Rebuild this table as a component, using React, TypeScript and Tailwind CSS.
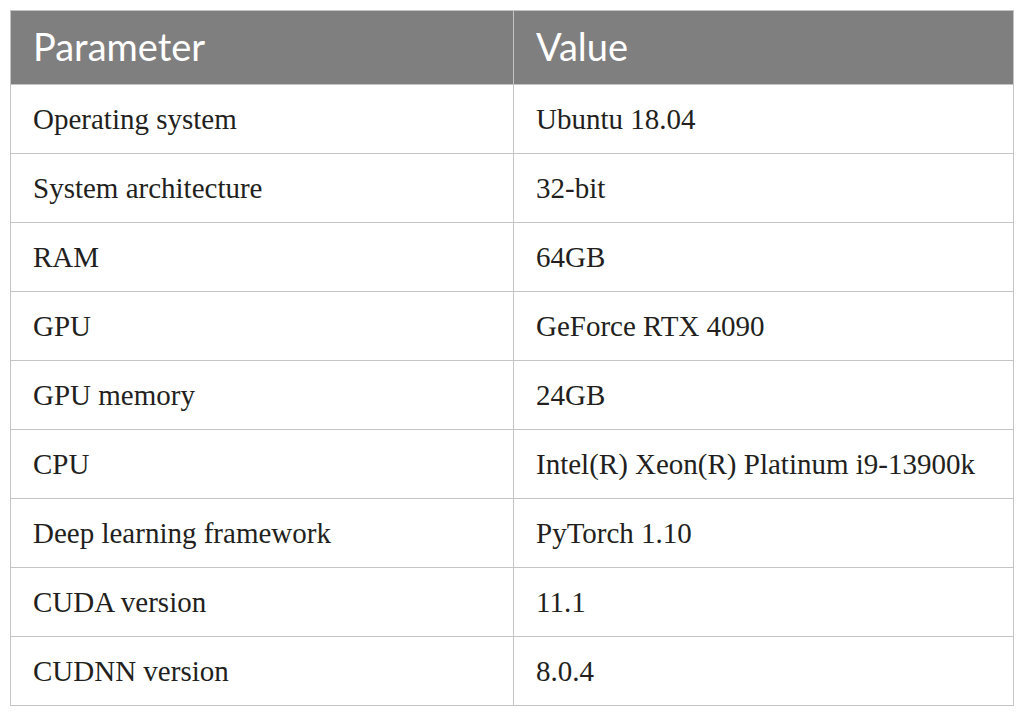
import React from 'react';

const rows: [string, string][] = [
  ['Operating system', 'Ubuntu 18.04'],
  ['System architecture', '32-bit'],
  ['RAM', '64GB'],
  ['GPU', 'GeForce RTX 4090'],
  ['GPU memory', '24GB'],
  ['CPU', 'Intel(R) Xeon(R) Platinum i9-13900k'],
  ['Deep learning framework', 'PyTorch 1.10'],
  ['CUDA version', '11.1'],
  ['CUDNN version', '8.0.4'],
];

const App: React.FC = () => {
  return (
    <div className="bg-white min-h-[718px] pt-[10px] pl-[10px]">
      <table className="w-[1004px] border-collapse table-fixed">
        <thead>
          <tr className="h-[74px] bg-[#7f7f7f]">
            <th className="w-[503px] border border-[#c4c4c4] pl-[22px] pb-[4px] text-left font-normal text-white text-[38px] leading-none font-['Lato',sans-serif]">
              Parameter
            </th>
            <th className="border border-[#c4c4c4] pl-[22px] pb-[4px] text-left font-normal text-white text-[38px] leading-none font-['Lato',sans-serif]">
              Value
            </th>
          </tr>
        </thead>
        <tbody>
          {rows.map(([param, value]) => (
            <tr key={param} className="h-[69px]">
              {/* parameter cell */}
              <td className="border border-[#c4c4c4] pl-[22px] text-[#231f20] text-[29px] leading-none font-['Liberation_Serif',serif]">
                {param}
              </td>
              <td className="border border-[#c4c4c4] pl-[22px] text-[#231f20] text-[29px] leading-none font-['Liberation_Serif',serif]">
                {value}
              </td>
            </tr>
          ))}
        </tbody>
      </table>
    </div>
  );
};

export default App;
